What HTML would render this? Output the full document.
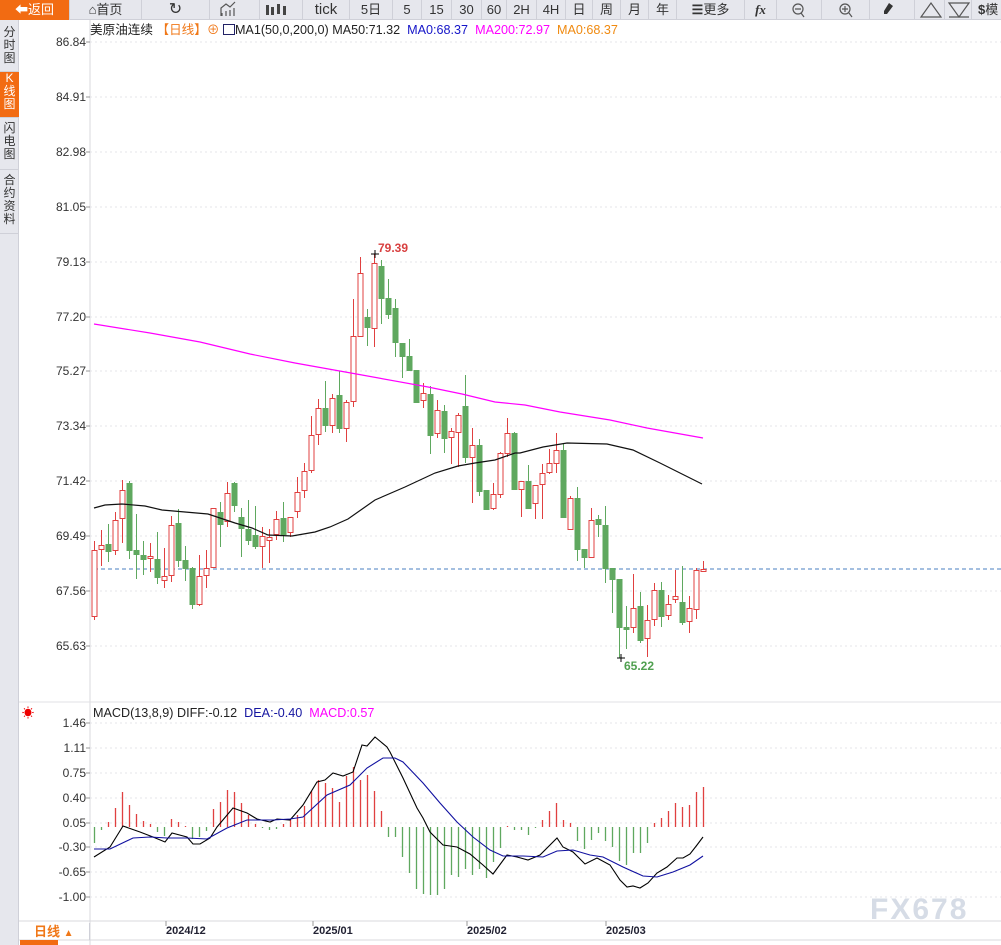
<!DOCTYPE html>
<html><head><meta charset="utf-8"><style>
*{margin:0;padding:0;box-sizing:border-box}
body{width:1001px;height:945px;overflow:hidden;background:#fff;font-family:"Liberation Sans","Noto Sans CJK SC",sans-serif;position:relative;color:#222}
#tb{position:absolute;left:0;top:0;width:1001px;height:20px;background:#e6e7ed;border-bottom:1px solid #cfd0d8}
.b{position:absolute;top:0;height:20px;border-right:1px solid #cfd0d8;font-size:13px;line-height:20px;text-align:center;color:#333}
#side{position:absolute;left:0;top:20px;width:19px;height:925px;background:#e6e7ed;border-right:1px solid #cfd0d8}
.st{position:absolute;left:0;width:19px;font-size:12px;line-height:13px;text-align:center;color:#333;border-bottom:1px solid #cfd0d8}
.yl{position:absolute;right:915px;font-size:12px;color:#333;line-height:12px}
svg{position:absolute;left:0;top:0}
</style></head><body>
<div id="tb">
<div class="b" style="left:0;width:70px;background:#f26b12;color:#fff">⬅返回</div>
<div class="b" style="left:70px;width:72px">⌂首页</div>
<div class="b" style="left:142px;width:68px;font-size:16px">↻</div>
<div class="b" style="left:210px;width:50px"></div>
<div class="b" style="left:260px;width:43px"></div>
<div class="b" style="left:303px;width:47px;font-size:15px">tick</div>
<div class="b" style="left:350px;width:43px">5日</div>
<div class="b" style="left:393px;width:29px">5</div>
<div class="b" style="left:422px;width:30px">15</div>
<div class="b" style="left:452px;width:30px">30</div>
<div class="b" style="left:482px;width:25px">60</div>
<div class="b" style="left:507px;width:30px">2H</div>
<div class="b" style="left:537px;width:29px">4H</div>
<div class="b" style="left:566px;width:27px">日</div>
<div class="b" style="left:593px;width:28px">周</div>
<div class="b" style="left:621px;width:28px">月</div>
<div class="b" style="left:649px;width:28px">年</div>
<div class="b" style="left:677px;width:68px"><b>☰</b>更多</div>
<div class="b" style="left:745px;width:32px;font-style:italic;font-weight:bold;font-family:'Liberation Serif',serif">fx</div>
<div class="b" style="left:777px;width:45px"></div>
<div class="b" style="left:822px;width:48px"></div>
<div class="b" style="left:870px;width:45px"></div>
<div class="b" style="left:915px;width:30px"></div>
<div class="b" style="left:945px;width:27px"></div>
<div class="b" style="left:972px;width:40px;text-align:left;padding-left:6px"><b>$</b>模</div>
</div>
<div id="side">
<div class="st" style="top:6px;height:46px">分<br>时<br>图</div>
<div class="st" style="top:52px;height:46px;background:#f26b12;color:#fff">K<br>线<br>图</div>
<div class="st" style="top:98px;height:52px;padding-top:4px">闪<br>电<br>图</div>
<div class="st" style="top:150px;height:64px;padding-top:4px">合<br>约<br>资<br>料</div>
</div>
<svg width="1001" height="945" id="g">
<g fill="none" stroke="#555" stroke-width="1.2">
<path d="M221 16V8l5-4 4 3 5-5M222 16v-3M226 16v-5M230 16v-6M234 16v-8"/>
<circle cx="798" cy="9" r="5"/><path d="M795 9h6M801 13l3 4"/>
<circle cx="845" cy="9" r="5"/><path d="M842 9h6M845 6v6M849 13l3 4"/>
<path d="M921 17h20l-10-14z"/><path d="M949 3h20l-10 14zM949 17h20"/>
</g>
<path d="M889 3l4 3-6 8h-3v-3zM884 17h12" fill="#333"/>
<g fill="#444"><rect x="266" y="5" width="3" height="10"/><rect x="271" y="7" width="3" height="8"/><rect x="277" y="4" width="3" height="10"/><rect x="283" y="6" width="3" height="9"/></g>
</svg>
<div style="position:absolute;left:90px;top:22px;font-size:12.6px;white-space:nowrap;line-height:16px">美原油连续 <span style="color:#f07818">【日线】⊕</span> <span style="display:inline-block;width:12px;height:11px;border:1px solid #226;vertical-align:-1px"></span>MA1(50,0,200,0) MA50:71.32&nbsp; <span style="color:#1515c8">MA0:68.37</span>&nbsp; <span style="color:#f0f">MA200:72.97</span>&nbsp; <span style="color:#f08a10">MA0:68.37</span></div>
<div style="position:absolute;left:93px;top:705px;font-size:12.6px;white-space:nowrap;line-height:16px">MACD(13,8,9) DIFF:-0.12&nbsp; <span style="color:#1515a0">DEA:-0.40</span>&nbsp; <span style="color:#f0f">MACD:0.57</span></div>
<div style="position:absolute;left:22px;top:704px;color:#e00;font-size:12px">☀</div>
<div class="yl" style="top:36px">86.84</div><div class="yl" style="top:91px">84.91</div><div class="yl" style="top:146px">82.98</div><div class="yl" style="top:201px">81.05</div><div class="yl" style="top:256px">79.13</div><div class="yl" style="top:311px">77.20</div><div class="yl" style="top:365px">75.27</div><div class="yl" style="top:420px">73.34</div><div class="yl" style="top:475px">71.42</div><div class="yl" style="top:530px">69.49</div><div class="yl" style="top:585px">67.56</div><div class="yl" style="top:640px">65.63</div>
<div class="yl" style="top:717px">1.46</div><div class="yl" style="top:742px">1.11</div><div class="yl" style="top:767px">0.75</div><div class="yl" style="top:792px">0.40</div><div class="yl" style="top:817px">0.05</div><div class="yl" style="top:841px">-0.30</div><div class="yl" style="top:866px">-0.65</div><div class="yl" style="top:891px">-1.00</div>
<div style="position:absolute;left:378px;top:241px;color:#d84040;font-size:12px;font-weight:bold">79.39</div>
<div style="position:absolute;left:624px;top:659px;color:#50a050;font-size:12px;font-weight:bold">65.22</div>
<div style="position:absolute;left:20px;top:923px;width:70px;height:17px;color:#f07818;font-size:13px;font-weight:bold;line-height:17px;padding-left:14px;border-right:1px solid #cfd0d8">日线 <span style="font-size:10px">▲</span></div>
<div style="position:absolute;top:925px;left:166px;font-size:11px;font-weight:bold;color:#223">2024/12</div>
<div style="position:absolute;top:925px;left:313px;font-size:11px;font-weight:bold;color:#223">2025/01</div>
<div style="position:absolute;top:925px;left:467px;font-size:11px;font-weight:bold;color:#223">2025/02</div>
<div style="position:absolute;top:925px;left:606px;font-size:11px;font-weight:bold;color:#223">2025/03</div>
<div style="position:absolute;left:20px;top:940px;width:38px;height:5px;background:#f26b12"></div>
<div style="position:absolute;left:870px;top:893px;font-size:30px;font-weight:bold;color:#d6dce6;letter-spacing:2px">FX678</div>
<script>
var s=document.getElementById('g'),h='';
function L(a,c,w,d){h+='<polyline fill="none" stroke="'+c+'" stroke-width="'+(w||1)+'"'+(d?' stroke-dasharray="'+d+'"':'')+' points="'+a+'"/>';}
h+='<line x1="90" y1="20" x2="90" y2="945" stroke="#d8d8de"/>';
h+='<line x1="19" y1="702" x2="1001" y2="702" stroke="#e0e0e4"/>';
h+='<line x1="19" y1="921" x2="1001" y2="921" stroke="#d8d8de"/>';
h+='<line x1="19" y1="940" x2="1001" y2="940" stroke="#d8d8de"/>';
[42,97,152,207,262,317,371,426,481,536,591,646,723,748,773,798,823,847,872,897].forEach(function(y){L('90,'+y+' 1001,'+y,'#e4e4e8',1,'2,3');L('86,'+y+' 90,'+y,'#999')});
[166,313,467,606].forEach(function(x){L(x+',921 '+x+',926','#999')});
var C=[[550,616,541,620,1],[545,549,530,566,1],[544,551,524,562,0],[520,550,512,555,1],[490,518,480,543,1],[483,550,481,559,0],[550,554,514,579,0],[555,559,541,575,0],[556,558,543,572,1],[559,577,532,584,0],[576,580,548,588,1],[525,575,516,582,1],[523,560,509,567,0],[560,568,546,581,0],[568,604,567,609,0],[576,604,555,606,1],[568,575,550,588,1],[508,567,508,567,1],[512,524,502,547,0],[493,521,482,527,1],[483,505,482,512,0],[517,528,508,557,0],[529,540,500,545,0],[535,546,506,549,0],[536,546,527,568,1],[537,540,529,563,1],[519,534,511,540,1],[518,534,502,542,0],[517,532,517,537,1],[492,511,477,518,1],[471,490,463,498,1],[435,470,416,473,1],[408,434,399,445,1],[408,425,381,432,0],[398,425,394,433,1],[395,428,371,433,0],[402,428,400,442,1],[336,401,299,407,1],[273,336,257,337,1],[317,327,309,346,0],[263,328,254,347,1],[266,298,260,324,0],[298,314,279,319,0],[308,342,299,357,0],[343,356,343,378,0],[356,370,339,370,0],[370,402,370,402,0],[393,400,383,408,1],[394,435,386,454,0],[410,433,400,438,1],[411,438,405,453,0],[431,437,428,464,1],[415,432,413,467,1],[406,457,375,463,0],[445,457,428,503,1],[445,491,439,496,0],[490,509,490,509,0],[494,508,483,510,1],[453,494,452,498,1],[433,453,418,457,1],[433,489,432,490,0],[481,489,481,517,1],[481,508,465,508,0],[485,503,485,519,1],[473,484,464,519,1],[463,472,449,474,1],[450,463,433,473,1],[450,517,443,518,0],[498,529,496,530,1],[498,549,487,561,0],[549,557,549,568,0],[520,557,508,557,1],[519,524,515,537,0],[525,568,506,583,0],[568,579,568,613,0],[579,627,579,658,0],[627,629,606,649,0],[608,627,574,633,1],[606,640,592,643,0],[620,638,605,657,1],[590,619,583,626,1],[590,616,582,627,0],[604,615,595,620,1],[596,599,570,603,1],[602,622,566,625,0],[608,621,596,633,1],[570,609,568,619,1],[569,571,561,571,1]];
var R='#e04040',G='#5fa85f';
L('94,569 1001,569','#4a7fc0',1,'4,3');
C.forEach(function(c,i){var x=94+7*i,col=c[4]?R:G;
h+='<line x1="'+(x+.5)+'" y1="'+c[2]+'" x2="'+(x+.5)+'" y2="'+c[3]+'" stroke="'+col+'"/>';
var hh=Math.max(c[1]-c[0],1);
if(c[4])h+='<rect x="'+(x-2)+'" y="'+(c[0]+.5)+'" width="5" height="'+hh+'" fill="#fff" stroke="'+R+'"/>';
else h+='<rect x="'+(x-2.5)+'" y="'+c[0]+'" width="6" height="'+(hh+1)+'" fill="'+G+'"/>';});
L('94,508 105,505 122,504 145,506 162,510 185,512 208,514 235,523 252,528 268,535 292,536 315,532 330,527 348,519 375,500 405,487 435,473 458,466 475,463 495,460 515,453 520,453 543,447 567,443 607,444 633,450 660,463 680,473 702,484','#111',1.2);
L('94,324 150,333 200,342 250,354 295,363 362,375 428,387 462,394 495,402 525,405 560,412 610,420 647,428 703,438','#f0f',1.2);
h+='<path d="M371 254h8M375 250v8M617 658h8M621 654v8" stroke="#000"/>';
var M=[843,830,822,808,792,805,814,821,824,832,836,819,822,826,839,837,831,809,802,790,792,803,815,824,828,830,829,824,820,815,806,791,780,783,788,802,776,767,780,775,791,811,837,837,857,873,889,894,895,895,889,875,877,869,875,869,878,862,848,826,830,830,835,828,820,811,803,820,823,841,849,840,833,841,847,861,865,853,853,843,823,818,811,803,807,805,792,787];
M.forEach(function(y,i){var x=94.5+7*i;h+='<line x1="'+x+'" y1="827" x2="'+x+'" y2="'+y+'" stroke="'+(y<827?R:G)+'" stroke-width="1.3"/>';});
L('94,857 110,847 123,826 140,832 153,837 165,842 172,833 187,837 193,844 200,844 210,838 217,827 233,808 247,813 257,819 270,822 277,819 290,820 303,805 317,782 325,780 333,773 343,776 353,772 362,745 367,746 375,737 387,747 390,752 403,778 417,808 423,818 430,832 443,845 457,847 470,854 483,865 493,874 507,855 517,857 528,860 540,855 557,838 563,847 573,852 585,864 597,858 610,865 620,880 627,887 633,886 640,888 648,883 657,873 667,867 677,858 683,858 690,854 697,845 703,837','#000',1.1);
L('94,849 110,849 133,838 150,837 167,838 187,838 207,839 227,828 247,820 273,820 290,819 303,817 327,795 350,785 367,768 383,758 395,758 403,762 423,783 440,803 457,822 473,837 490,850 503,856 523,856 543,857 557,851 573,850 590,855 603,857 623,867 643,876 657,877 673,872 690,865 703,856','#1010a0',1.1);
s.innerHTML+=h;
</script>
</body></html>
